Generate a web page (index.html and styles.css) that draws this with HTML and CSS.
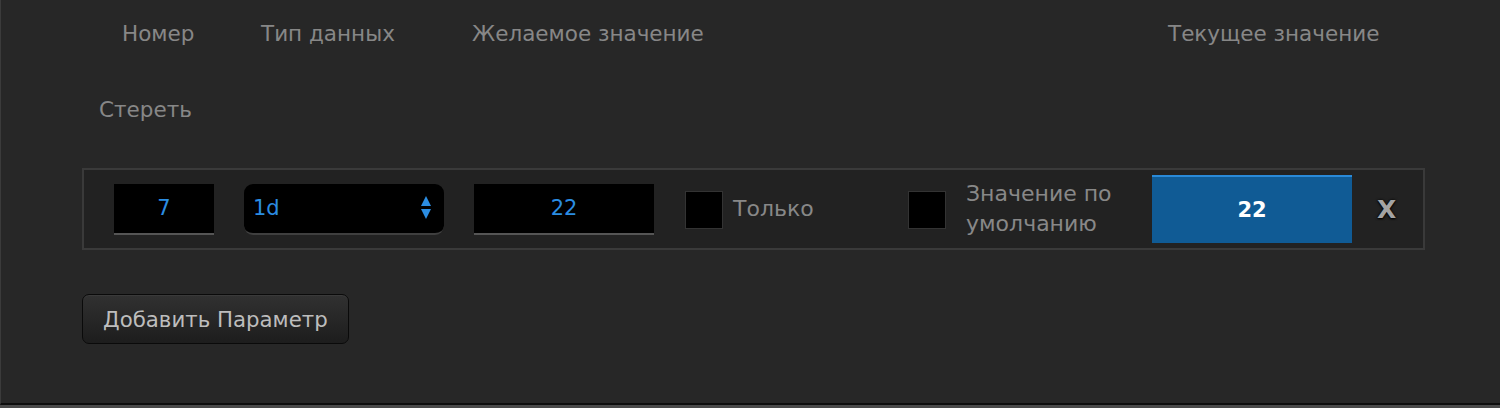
FILE: index.html
```html
<!DOCTYPE html>
<html lang="ru">
<head>
<meta charset="utf-8">
<title>Параметры</title>
<link rel="stylesheet" href="styles.css">
</head>
<body>
<div class="panel">
  <div class="head">
    <div class="head-row">
      <span class="h">Номер</span>
      <span class="h">Тип данных</span>
      <span class="h">Желаемое значение</span>
      <span class="h">Текущее значение</span>
    </div>
    <div class="head-row2">
      <span class="h">Стереть</span>
    </div>
  </div>

  <div class="row">
    <div class="inp inp-num">7</div>
    <div class="sel">
      <span class="sel-val">1d</span>
      <svg class="sel-arrow" width="10" height="24" viewBox="0 0 10 24">
        <path d="M5 0 L10 10 L0 10 Z" fill="#2b8de2"/>
        <path d="M0 13 L10 13 L5 23 Z" fill="#2b8de2"/>
      </svg>
    </div>
    <div class="inp inp-val">22</div>
    <div class="chk chk1"></div>
    <div class="lbl lbl1">Только</div>
    <div class="chk"></div>
    <div class="lbl lbl2">Значение по умолчанию</div>
    <div class="cur">22</div>
    <div class="del">X</div>
  </div>

  <button class="add">Добавить Параметр</button>
</div>
<div class="footer"></div>
</body>
</html>
```

FILE: styles.css
```css
html, body {
  margin: 0;
  padding: 0;
  background: #272727;
  font-family: "DejaVu Sans", Verdana, sans-serif;
}

.panel {
  box-sizing: border-box;
  height: 405px;
  border-left: 1px solid #3b3b3b;
  border-bottom: 2px solid #0d0d0d;
  background: #272727;
  overflow: hidden;
}

.footer {
  height: 3px;
  background: #4a4a4a;
}

.h {
  color: #878787;
  font-size: 21.5px;
  line-height: 30px;
  white-space: nowrap;
}

.head-row {
  display: grid;
  grid-template-columns: 139px 211px 696px auto;
  padding-left: 121px;
  padding-top: 19px;
}

.head-row2 {
  padding-left: 98px;
  margin-top: 46px;
}

.row {
  box-sizing: border-box;
  margin: 43px 0 0 81px;
  width: 1343px;
  height: 82px;
  border: 2px solid #3a3a3a;
  background: #222222;
  display: flex;
  align-items: center;
  padding-left: 30px;
}

.inp {
  box-sizing: border-box;
  height: 51px;
  background: #000;
  border-bottom: 2px solid #555;
  color: #2b8de2;
  font-size: 21px;
  display: flex;
  align-items: center;
  justify-content: center;
}

.inp-num {
  width: 100px;
}

.inp-val {
  width: 180px;
  margin-left: 30px;
}

.sel {
  box-sizing: border-box;
  width: 200px;
  height: 51px;
  margin-left: 30px;
  background: #000;
  border-radius: 9px;
  border-bottom: 2px solid #3f3f3f;
  display: flex;
  align-items: center;
  padding: 0 13px 0 9px;
  color: #2b8de2;
  font-size: 21px;
}

.sel-val {
  flex: 1;
}

.sel-arrow {
  display: block;
}

.chk {
  box-sizing: border-box;
  width: 38px;
  height: 38px;
  margin-top: 1px;
  background: #000;
  border: 1px solid #333;
}

.chk1 {
  margin-left: 31px;
}

.lbl {
  color: #888;
  font-size: 22px;
  line-height: 30px;
}

.lbl1 {
  margin-left: 10px;
  width: 175px;
}

.lbl2 {
  margin-left: 20px;
  width: 166px;
}

.cur {
  box-sizing: border-box;
  width: 200px;
  height: 68px;
  margin-left: 20px;
  background: #105b95;
  border-top: 2px solid #2a8ad8;
  color: #fff;
  font-weight: bold;
  font-size: 21px;
  display: flex;
  align-items: center;
  justify-content: center;
}

.del {
  margin-left: 25px;
  color: #a3a3a3;
  font-weight: bold;
  font-size: 25px;
  text-shadow: 0 0 3px #000, 0 1px 2px #000;
}

.add {
  display: block;
  box-sizing: border-box;
  margin: 44px 0 0 81px;
  width: 267px;
  height: 50px;
  border: 1px solid #0a0a0a;
  border-radius: 7px;
  background: linear-gradient(#313131, #1d1d1d);
  box-shadow: inset 0 1px 0 #3a3a3a;
  color: #bdbdbd;
  font-family: "DejaVu Sans", Verdana, sans-serif;
  font-size: 21.3px;
  text-align: left;
  padding: 0 0 0 20px;
}
```
